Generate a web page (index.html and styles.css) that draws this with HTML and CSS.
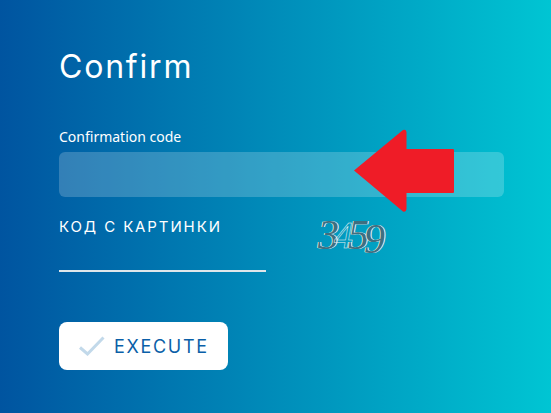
FILE: index.html
```html
<!DOCTYPE html>
<html lang="en">
<head>
    <meta charset="UTF-8">
    <title>Confirm</title>
    <link rel="stylesheet" href="styles.css">
</head>
<body>
    <form class="panel">
        <h1>Confirm</h1>
        <label class="field-label" for="code">Confirmation code</label>
        <input class="field-input" id="code" type="text">
        <div class="captcha-row">
            <div class="captcha-field">
                <label class="captcha-label" for="captcha">КОД С КАРТИНКИ</label>
                <input class="captcha-input" id="captcha" type="text">
            </div>
            <div class="captcha-image"><span>3</span><span class="thin">4</span><span>5</span><span class="tall">9</span></div>
        </div>
        <button class="execute" type="button">
            <svg class="check" width="26" height="20" viewBox="0 0 26 20">
                <path d="M1 11.500 L8.500 18 L24.500 1.500" fill="none" stroke="#c2d9ea" stroke-width="3"/>
            </svg>
            EXECUTE
        </button>
    </form>
    <svg class="arrow" width="102" height="84" viewBox="0 0 102 84">
        <path d="M1 41.500 L50 1 Q53 0 53.500 3 L53.500 20 L100 20 Q101 20 101 21 L101 63 Q101 64 100 64 L53.500 64 L53.500 80 Q53 83.500 50 82.500 Z" fill="#ef1c27"/>
    </svg>
</body>
</html>
```

FILE: styles.css
```css
* {
    margin: 0;
    padding: 0;
    box-sizing: border-box;
}

body {
    height: 413px;
    overflow: hidden;
    position: relative;
    font-family: 'Inter', sans-serif;
    background: linear-gradient(90deg, #0054a0, #00c5d3);
    color: #fff;
}

.panel {
    display: flex;
    flex-direction: column;
    align-items: flex-start;
    padding: 47px 47px 0 59px;
}

h1 {
    font-size: 32px;
    line-height: 40px;
    font-weight: 400;
    letter-spacing: 1.800px;
}

.field-label {
    margin-top: 41px;
    font-family: 'Noto Sans', sans-serif;
    font-size: 14px;
    line-height: 18px;
}

.field-input {
    width: 445px;
    height: 45px;
    margin-top: 6px;
    border: none;
    border-radius: 6px;
    background: rgba(255, 255, 255, 0.2);
}

.captcha-row {
    display: flex;
    margin-top: 20px;
}

.captcha-field {
    display: flex;
    flex-direction: column;
    width: 207px;
}

.captcha-label {
    font-size: 15px;
    line-height: 20px;
    font-weight: 400;
    letter-spacing: 1.900px;
}

.captcha-input {
    height: 35px;
    border: none;
    border-bottom: 2px solid #dfe6ea;
    background: transparent;
}

.captcha-image {
    display: flex;
    margin: -5px 0 0 52px;
    font-family: 'Liberation Serif', serif;
    font-style: italic;
    font-size: 42px;
    line-height: 46px;
    letter-spacing: -5px;
    color: #3f6f80;
    text-shadow: 1px 0 0 #e8f1f3, -1px 0 0 #d5e4e8;
}

.captcha-image .thin {
    color: transparent;
    font-size: 38px;
    -webkit-text-stroke: 0.5px #e8f1f3;
    text-shadow: none;
}

.captcha-image .tall {
    margin-top: 4px;
}

.execute {
    display: flex;
    align-items: center;
    gap: 9px;
    width: 169px;
    height: 48px;
    margin-top: 50px;
    padding-left: 20px;
    border: none;
    border-radius: 8px;
    background: #fff;
    color: #0a5fa8;
    font-family: 'Inter', sans-serif;
    font-size: 18px;
    letter-spacing: 1.700px;
}

.arrow {
    position: absolute;
    left: 353px;
    top: 129px;
}
```
